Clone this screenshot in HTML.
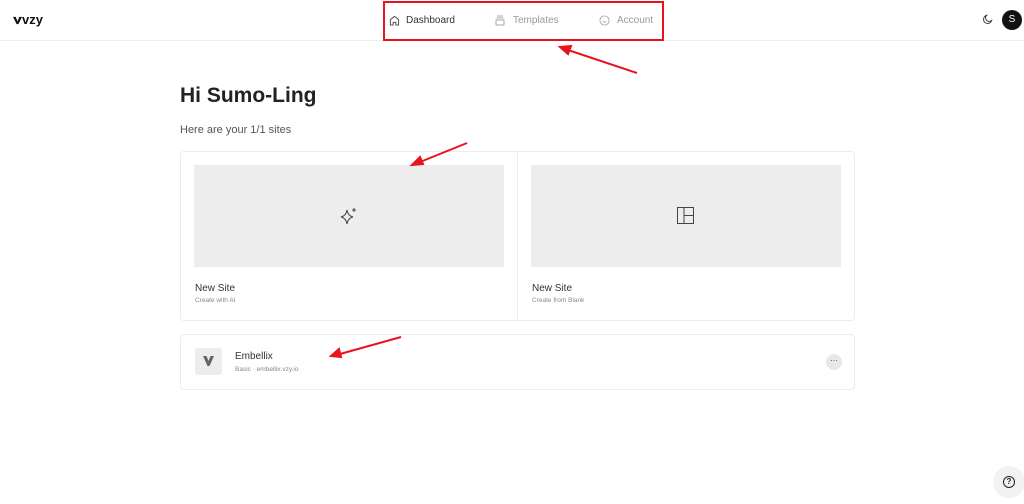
<!DOCTYPE html>
<html><head><meta charset="utf-8"><style>
*{box-sizing:border-box;margin:0;padding:0}
body{width:1024px;height:504px;background:#fff;font-family:"Liberation Sans",sans-serif;position:relative;overflow:hidden;color:#222}
.abs{position:absolute}
.hdr{left:0;top:0;width:1024px;height:41px;border-bottom:1px solid #eee}
.card{border:1px solid #ececec;border-radius:4px}
.ph{background:#ededed}
.t1{font-size:10px;color:#333}
.t2{font-size:6.5px;color:#888}
</style></head><body>
<div class="abs hdr"></div>
<div class="abs" style="left:13px;top:12px;font-weight:bold;font-size:13px;color:#111">
<svg width="9" height="9" viewBox="0 0 10 10" style="vertical-align:-1px"><path d="M0 1h3l2 5 2-5h3l-4 8h-2z" fill="#111"/></svg>vzy</div>
<div class="abs" style="left:383px;top:1px;width:281px;height:40px;border:2px solid #e8141c"></div>
<svg class="abs" style="left:389px;top:15px" width="11" height="11" viewBox="0 0 12 12"><path d="M1.5 11V5L6 1.5 10.5 5V11H7.5V8h-3v3z" fill="none" stroke="#444" stroke-width="1"/></svg>
<div class="abs" style="left:406px;top:15px;font-size:10px;color:#333">Dashboard</div>
<svg class="abs" style="left:495px;top:15px" width="10" height="11" viewBox="0 0 10 11"><path d="M2 1h6M1.5 3h7M1 5h8v5H1z" fill="none" stroke="#aaa" stroke-width="1"/></svg>
<div class="abs" style="left:513px;top:15px;font-size:10px;color:#999">Templates</div>
<svg class="abs" style="left:599px;top:15px" width="11" height="11" viewBox="0 0 12 12"><circle cx="6" cy="6" r="5" fill="none" stroke="#aaa"/><path d="M4 7q2 1.5 4 0" fill="none" stroke="#aaa"/></svg>
<div class="abs" style="left:617px;top:15px;font-size:10px;color:#999">Account</div>
<svg class="abs" style="left:982px;top:14px" width="11" height="11" viewBox="0 0 12 12"><path d="M5 1.5A4.5 4.5 0 1 0 10.5 7 3.5 3.5 0 0 1 5 1.5z" fill="none" stroke="#333"/></svg>
<div class="abs" style="left:1002px;top:10px;width:20px;height:20px;border-radius:50%;background:#111;color:#fff;font-size:10px;text-align:center;line-height:20px">S</div>
<div class="abs" style="left:180px;top:84px;font-size:21px;font-weight:bold;color:#222">Hi Sumo-Ling</div>
<div class="abs" style="left:180px;top:124px;font-size:11px;color:#555">Here are your 1/1 sites</div>
<div class="abs card" style="left:180px;top:151px;width:675px;height:170px"></div>
<div class="abs" style="left:517px;top:151px;width:1px;height:170px;background:#ececec"></div>
<div class="abs ph" style="left:194px;top:165px;width:310px;height:102px"></div>
<div class="abs ph" style="left:531px;top:165px;width:310px;height:102px"></div>
<svg class="abs" style="left:339px;top:206px" width="20" height="20" viewBox="0 0 20 20"><path d="M8 4q1 6 6 7-5 1-6 7-1-6-6-7 5-1 6-7z" fill="none" stroke="#444" stroke-width="1"/><path d="M15 2v4M13 4h4" stroke="#444"/></svg>
<svg class="abs" style="left:677px;top:207px" width="17" height="17" viewBox="0 0 17 17"><rect x="0.5" y="0.5" width="16" height="16" fill="none" stroke="#444"/><path d="M7 0.5v16M7 8.5h9.5" stroke="#444"/></svg>
<div class="abs t1" style="left:195px;top:283px">New Site</div>
<div class="abs t2" style="left:195px;top:297px">Create with AI</div>
<div class="abs t1" style="left:532px;top:283px">New Site</div>
<div class="abs t2" style="left:532px;top:297px">Create from Blank</div>
<div class="abs card" style="left:180px;top:334px;width:675px;height:56px"></div>
<div class="abs ph" style="left:195px;top:348px;width:27px;height:27px;border-radius:3px"></div>
<svg class="abs" style="left:203px;top:356px" width="11" height="10" viewBox="0 0 11 10"><path d="M0 0h3.5l2 5 2-5H11L6.5 10h-2z" fill="#666"/></svg>
<div class="abs t1" style="left:235px;top:351px">Embellix</div>
<div class="abs t2" style="left:235px;top:366px">Basic · embellix.vzy.io</div>
<div class="abs" style="left:826px;top:354px;width:16px;height:16px;border-radius:50%;background:#e8e8e8;font-size:8px;text-align:center;line-height:13px;color:#333">···</div>
<div class="abs" style="left:993px;top:466px;width:32px;height:32px;border-radius:50%;background:#f2f2f2"></div>
<div class="abs" style="left:1003px;top:476px;width:12px;height:12px;border-radius:50%;border:1.2px solid #222;font-size:8px;text-align:center;line-height:10px;font-weight:bold">?</div>
<svg class="abs" style="left:0;top:0" width="1024" height="504">
<g stroke="#e8141c" stroke-width="2" fill="#e8141c">
<line x1="637" y1="73" x2="568" y2="50"/><path d="M560 47l11-1-3 8z"/>
<line x1="467" y1="143" x2="420" y2="162"/><path d="M412 165l8-8 3 7z"/>
<line x1="401" y1="337" x2="340" y2="354"/><path d="M331 356l8-7 2 8z"/>
</g></svg>
</body></html>
